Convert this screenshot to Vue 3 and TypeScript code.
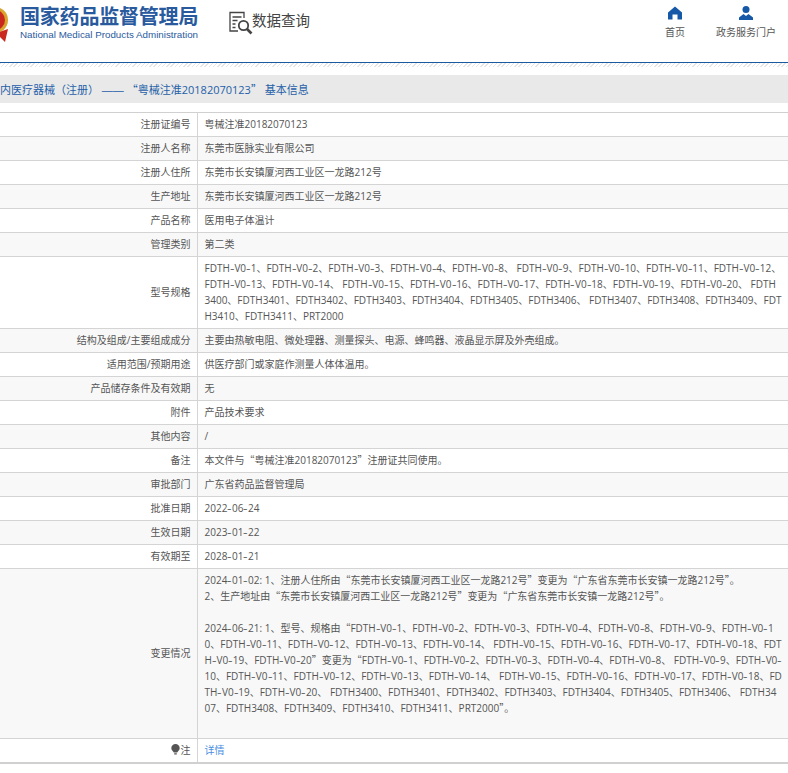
<script setup lang="ts">
interface Row { label: string; value: string; tall?: boolean }
interface Part { text: string; kind: string }

const rows: Row[] = [
  { label: '注册证编号', value: '粤械注准20182070123' },
  { label: '注册人名称', value: '东莞市医脉实业有限公司' },
  { label: '注册人住所', value: '东莞市长安镇厦河西工业区一龙路212号' },
  { label: '生产地址', value: '东莞市长安镇厦河西工业区一龙路212号' },
  { label: '产品名称', value: '医用电子体温计' },
  { label: '管理类别', value: '第二类' },
  { label: '型号规格', value: 'FDTH-V0-1、FDTH-V0-2、FDTH-V0-3、FDTH-V0-4、FDTH-V0-8、 FDTH-V0-9、FDTH-V0-10、FDTH-V0-11、FDTH-V0-12、\nFDTH-V0-13、FDTH-V0-14、 FDTH-V0-15、FDTH-V0-16、FDTH-V0-17、FDTH-V0-18、FDTH-V0-19、FDTH-V0-20、 FDTH\n3400、FDTH3401、FDTH3402、FDTH3403、FDTH3404、FDTH3405、FDTH3406、 FDTH3407、FDTH3408、FDTH3409、FDT\nH3410、FDTH3411、PRT2000' },
  { label: '结构及组成/主要组成成分', value: '主要由热敏电阻、微处理器、测量探头、电源、蜂鸣器、液晶显示屏及外壳组成。' },
  { label: '适用范围/预期用途', value: '供医疗部门或家庭作测量人体体温用。' },
  { label: '产品储存条件及有效期', value: '无' },
  { label: '附件', value: '产品技术要求' },
  { label: '其他内容', value: '/' },
  { label: '备注', value: '本文件与“粤械注准20182070123”注册证共同使用。' },
  { label: '审批部门', value: '广东省药品监督管理局' },
  { label: '批准日期', value: '2022-06-24' },
  { label: '生效日期', value: '2023-01-22' },
  { label: '有效期至', value: '2028-01-21' },
  { label: '变更情况', tall: true, value: '2024-01-02: 1、注册人住所由“东莞市长安镇厦河西工业区一龙路212号”变更为“广东省东莞市长安镇一龙路212号”。\n2、生产地址由“东莞市长安镇厦河西工业区一龙路212号”变更为“广东省东莞市长安镇一龙路212号”。\n\n2024-06-21: 1、型号、规格由“FDTH-V0-1、FDTH-V0-2、FDTH-V0-3、FDTH-V0-4、FDTH-V0-8、FDTH-V0-9、FDTH-V0-1\n0、FDTH-V0-11、FDTH-V0-12、FDTH-V0-13、FDTH-V0-14、 FDTH-V0-15、FDTH-V0-16、FDTH-V0-17、FDTH-V0-18、FDT\nH-V0-19、FDTH-V0-20”变更为“FDTH-V0-1、FDTH-V0-2、FDTH-V0-3、FDTH-V0-4、FDTH-V0-8、 FDTH-V0-9、FDTH-V0-\n10、FDTH-V0-11、FDTH-V0-12、FDTH-V0-13、FDTH-V0-14、 FDTH-V0-15、FDTH-V0-16、FDTH-V0-17、FDTH-V0-18、FD\nTH-V0-19、FDTH-V0-20、 FDTH3400、FDTH3401、FDTH3402、FDTH3403、FDTH3404、FDTH3405、FDTH3406、 FDTH34\n07、FDTH3408、FDTH3409、FDTH3410、FDTH3411、PRT2000”。\n' },
]

function parts(s: string): Part[] {
  return s.split(/(-|“|”|——)/).filter(Boolean).map((text) => ({
    text,
    kind: text === '-' ? 'hy' : text === '——' ? 'dash' : text === '“' || text === '”' ? 'qt' : '',
  }))
}
const title = parts('内医疗器械（注册） —— “粤械注准20182070123” 基本信息')
</script>

<template>
  <div class="page">
    <header class="top">
      <div class="emblem">
        <svg width="9" height="40" viewBox="0 0 9 40">
          <circle cx="-5" cy="17" r="13" fill="#d9a52f" />
          <circle cx="-5" cy="17" r="10" fill="#c8281e" />
          <path d="M-4 30 L8 26 L5 39 L0 34 Z" fill="#c8281e" />
        </svg>
      </div>
      <div class="brand">
        <div class="brand-cn">国家药品监督管理局</div>
        <div class="brand-en">National Medical Products Administration</div>
      </div>
      <div class="query">
        <svg width="24" height="24" viewBox="0 0 24 24" fill="none" stroke="#444" stroke-width="1.3">
          <path d="M9 20H1V1.5H15V7" />
          <path d="M3.5 6h9M3.5 9.5h5M3.5 13h3M3.5 16.5h3" />
          <circle cx="14.5" cy="14.5" r="4.7" stroke-width="1.8" />
          <path d="M18 18L22.5 22.5" stroke-width="2.6" />
        </svg>
        <span>数据查询</span>
      </div>
      <nav class="nav">
        <a class="nav-item">
          <svg width="14" height="14" viewBox="0 0 14 14">
            <path d="M7 0.5L14 6.5V13.5H9.5V8.5H4.5V13.5H0V6.5Z" fill="#1558a8" />
          </svg>
          <span>首页</span>
        </a>
        <a class="nav-item">
          <svg width="14" height="14" viewBox="0 0 14 14">
            <circle cx="7" cy="3.5" r="3.5" fill="#1558a8" />
            <path d="M0 14V11.5L4.5 8L7 10L9.5 8L14 11.5V14Z" fill="#1558a8" />
          </svg>
          <span>政务服务门户</span>
        </a>
      </nav>
    </header>
    <div class="hatch"></div>
    <h2 class="title"><span v-for="(p, i) in title" :key="i" :class="p.kind">{{ p.text }}</span></h2>
    <table class="info">
      <tbody>
        <tr v-for="r in rows" :key="r.label">
          <th>{{ r.label }}</th>
          <td :class="{ tall: r.tall }">
            <div v-for="(line, n) in r.value.split('\n')" :key="n" class="line"><span v-for="(p, i) in parts(line)" :key="i" :class="p.kind">{{ p.text }}</span></div>
          </td>
        </tr>
        <tr>
          <th><svg class="bulb" width="9" height="11" viewBox="0 0 9 11"><path d="M4.5 0A4.2 4.2 0 0 1 8.7 4.2C8.7 6 7 7 6.2 8.5H2.8C2 7 .3 6 .3 4.2A4.2 4.2 0 0 1 4.5 0ZM3.2 9.3H5.8V10.5H3.2Z" fill="#555" /></svg>注</th>
          <td><a class="link">详情</a></td>
        </tr>
      </tbody>
    </table>
  </div>
</template>

<style scoped>
.page {
  width: 788px;
  height: 773px;
  overflow: hidden;
  background: #fff;
  font-family: "Open Sans", "Noto Sans CJK SC", sans-serif;
  font-size: 10px;
  color: #555;
}
.top {
  display: flex;
  height: 62px;
  border-bottom: 1px solid #1a5a9e;
}
.emblem { padding-top: 3px; width: 20px; }
.brand { width: 180px; padding-top: 6px; }
.brand-cn { font-size: 20px; line-height: 22px; font-weight: 700; color: #2a5a9e; white-space: nowrap; letter-spacing: -0.2px; }
.brand-en { font-size: 9.8px; line-height: 12px; margin-top: 1px; color: #2a5a9e; white-space: nowrap; font-family: "Liberation Sans", sans-serif; }
.query { display: flex; align-items: flex-start; margin-left: 29px; padding-top: 11px; }
.query span { font-size: 14.5px; line-height: 20px; color: #444; margin-left: -1px; }
.nav { margin-left: auto; display: flex; padding-top: 6px; padding-right: 12px; gap: 31px; }
.nav-item { display: flex; flex-direction: column; align-items: center; gap: 5px; line-height: 14px; color: #555; }
.hatch {
  height: 12px;
  background: repeating-linear-gradient(135deg, #e6e6e6 0 1px, #fff 1px 3px);
  background-size: 100% 4px;
  background-repeat: no-repeat;
}
.title {
  margin: 0;
  height: 28px;
  line-height: 28px;
  background: #e9e9e9;
  font-size: 11px;
  font-weight: 400;
  color: #1f5fa8;
  white-space: pre;
}
.hy { display: inline-block; padding: 0 0.7px; transform: scaleX(1.4); }
.qt { font-family: "Noto Sans CJK SC", sans-serif; }
.dash { font-family: "Liberation Sans", sans-serif; }
.info {
  margin-top: 9px;
  width: 788px;
  border-collapse: collapse;
  table-layout: fixed;
  border-top: 1px solid #d0d0d0;
  border-bottom: 2px solid #d0d0d0;
}
.info tr { border-bottom: 1px solid #d4d4d4; }
.info tr:nth-child(even) { background: #f8f8f8; }
.info th {
  width: 197px;
  box-sizing: border-box;
  padding: 3px 6px 4px 0;
  text-align: right;
  font-weight: 400;
  line-height: 16px;
  border-right: 1px solid #d4d4d4;
}
.info td {
  padding: 3px 0 4px 7px;
  line-height: 16px;
}
.info td.tall { padding-bottom: 6px; }
.line { min-height: 16px; white-space: pre; }
.bulb { vertical-align: -1px; margin-right: 1px; }
.link { color: #4a90e2; }
</style>
